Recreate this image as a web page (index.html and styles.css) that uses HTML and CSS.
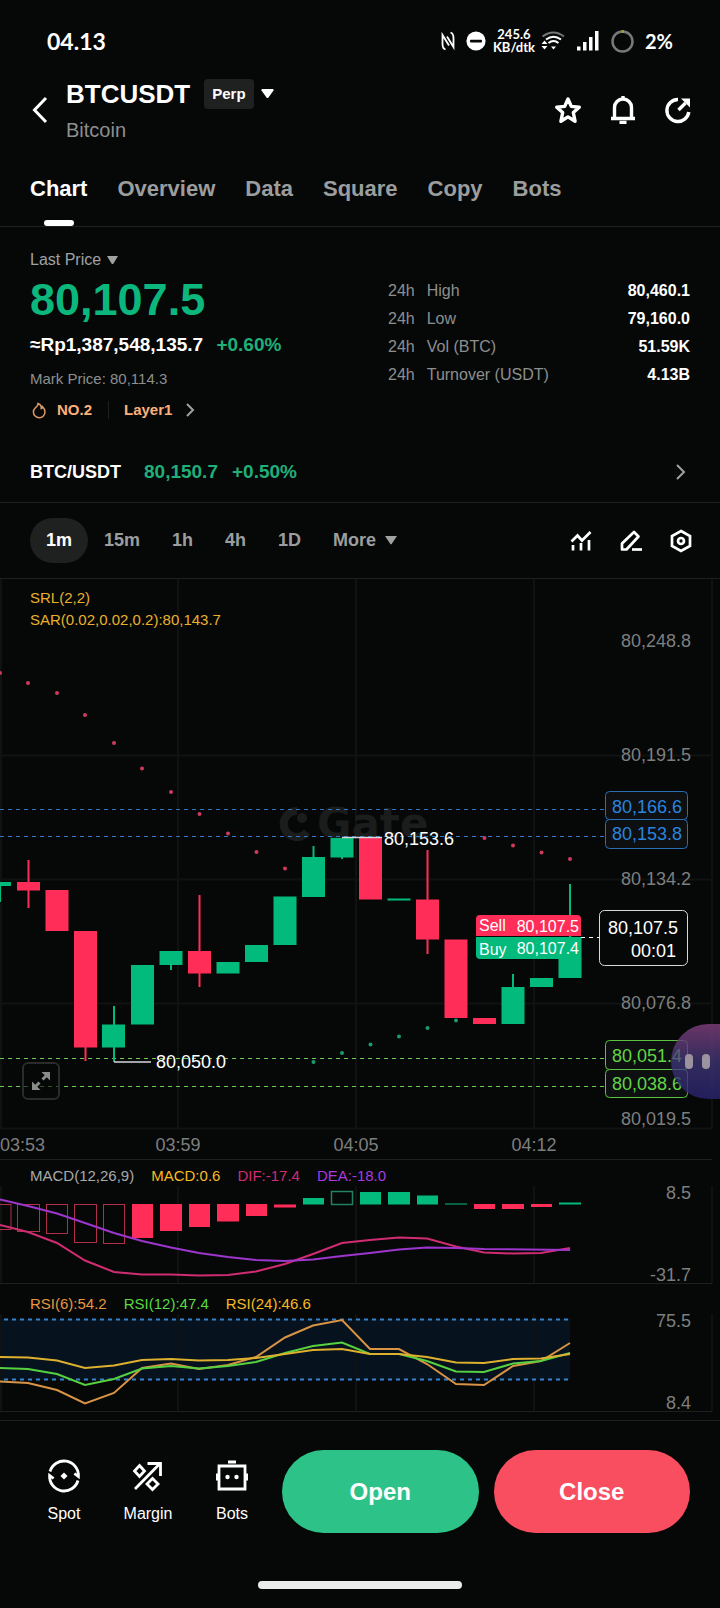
FILE: index.html
```html
<!DOCTYPE html>
<html lang="en">
<head>
  <meta charset="UTF-8" />
  <meta name="viewport" content="width=device-width, initial-scale=1.0"/>
  <title>BTCUSDT Perp</title>
  <link rel="stylesheet" href="styles.css">
</head>
<body>

  <!-- Status bar -->
  <div class="status">
    <span class="clock">04.13</span>
    <div class="status-icons">
      <svg class="nfc" width="14" height="20" viewBox="0 0 14 20" fill="none" stroke="#fff" stroke-width="1.800"><path d="M4.500 18.500Q1.500 17.500 1.500 13V4L8 14.500"/><path d="M9.500 1.500Q12.500 2.500 12.500 7v9L6 5.500"/></svg>
      <svg class="dnd" width="20" height="20" viewBox="0 0 20 20"><circle cx="10" cy="10" r="9.6" fill="#fff"/><rect x="4" y="8.700" width="12" height="2.800" rx="1" fill="#060808"/></svg>
      <span class="speed">245.6<br>KB/dtk</span>
      <svg class="wifi" width="24" height="20" viewBox="0 0 24 20" fill="none" stroke="#fff" stroke-width="2"><path d="M1.500 5.500Q12.500-2.500 23 5.500" stroke="#747676"/><path d="M5 8.500Q12.500 3 20 8.500"/><path d="M7.500 12Q12.500 8 17.500 12"/><path d="M12.500 18.500 10 15.500h5z" fill="#fff" stroke="none"/><path d="M3.500 9.500 6.500 13h-6zM3.500 18.500.5 15h6z" fill="#fff" stroke="none"/></svg>
      <svg class="signal" width="22" height="20" viewBox="0 0 22 20" fill="#fff"><rect x="0" y="15.500" width="3.500" height="4"/><rect x="6" y="11" width="3.500" height="8.500"/><rect x="12" y="6" width="3.500" height="13.500"/><rect x="18" y="0" width="3.500" height="19.500"/></svg>
      <svg class="battery" width="23" height="23" viewBox="0 0 23 23" fill="none" stroke-width="2.500"><circle cx="11.500" cy="11.500" r="10" stroke="#777979"/><path d="M10.500 1.500h2.500" stroke="#a9a42c"/></svg>
      <span class="percent">2%</span>
    </div>
  </div>

  <!-- Header -->
  <header class="header">
    <button class="icon-btn back" aria-label="Back">
      <svg width="16" height="28" viewBox="0 0 16 28" fill="none" stroke="#fff" stroke-width="3"><path d="M14 2 2.500 14 14 26"/></svg>
    </button>
    <div class="pair">
      <div class="pair-row">
        <h1>BTCUSDT</h1>
        <span class="badge">Perp</span>
        <button class="icon-btn" aria-label="Change pair">
          <svg width="13" height="10" viewBox="0 0 13 10"><path d="M1 0h11q1 .5.500 1.500L7.500 8.500q-1 1-2 0L.5 1.500Q0 .5 1 0z" fill="#fff"/></svg>
        </button>
      </div>
      <p>Bitcoin</p>
    </div>
    <div class="header-icons">
      <button class="icon-btn" aria-label="Favourite">
        <svg width="28" height="28" viewBox="0 0 28 28" fill="none" stroke="#fff" stroke-width="3.400" stroke-linejoin="round"><path d="m14 3 3.300 7.400 8 .8-6 5.300 1.800 8.800-7.100-4.400-7.100 4.400 1.800-8.800-6-5.300 8-.8z"/></svg>
      </button>
      <button class="icon-btn" aria-label="Alerts">
        <svg width="28" height="28" viewBox="0 0 28 28" fill="none" stroke="#fff" stroke-width="3.400"><path d="M2 22.500h24M5.500 22.500V11.500a8.500 8.500 0 0 1 17 0v11"/><path d="M14 0v3.500M10.500 26.500h7"/></svg>
      </button>
      <button class="icon-btn" aria-label="Share">
        <svg width="28" height="28" viewBox="0 0 28 28" fill="none" stroke="#fff" stroke-width="3.400"><path d="M14 3.500A11 11 0 1 0 24.800 16"/><path d="m14.500 14 7-7"/><path d="M17 2.500h9v9z" fill="#fff" stroke="none"/></svg>
      </button>
    </div>
  </header>

  <nav class="tabs">
    <a href="#chart" class="active">Chart</a>
    <a href="#overview">Overview</a>
    <a href="#data">Data</a>
    <a href="#square">Square</a>
    <a href="#copy">Copy</a>
    <a href="#bots">Bots</a>
  </nav>

  <!-- Price summary -->
  <section class="summary">
    <div class="price">
      <button class="price-type">Last Price
        <svg width="11" height="9" viewBox="0 0 11 9"><path d="M0 0h11L6.500 7.500q-1 1-2 0z" fill="#a0a2a2"/></svg>
      </button>
      <div class="last">80,107.5</div>
      <div class="fiat">≈Rp1,387,548,135.7 <span class="up">+0.60%</span></div>
      <div class="mark">Mark Price: 80,114.3</div>
      <div class="tags">
        <svg width="18" height="20" viewBox="0 0 18 20" fill="none" stroke="#e09a64" stroke-width="1.500"><path d="M8 3.500c2.500 1 3.500 3 3.200 5 .9-.2 1.400-.9 1.400-1.800 1.600 1.500 2.400 3.400 2.400 5.100a5.800 5.800 0 0 1-11.600.2c0-2 .9-3.100 2-4.200C7.200 6.500 8 5.400 8 3.500z"/></svg>
        <a href="#rank">NO.2</a>
        <span class="divider"></span>
        <a href="#layer1">Layer1</a>
        <svg class="tag-arrow" width="9" height="14" viewBox="0 0 9 14" fill="none" stroke="#a0a2a2" stroke-width="2"><path d="m1 1 6 6-6 6"/></svg>
      </div>
    </div>
    <table class="stats">
      <tr><th>24h</th><th>High</th><td>80,460.1</td></tr>
      <tr><th>24h</th><th>Low</th><td>79,160.0</td></tr>
      <tr><th>24h</th><th>Vol (BTC)</th><td>51.59K</td></tr>
      <tr><th>24h</th><th>Turnover (USDT)</th><td>4.13B</td></tr>
    </table>
  </section>

  <a class="spot-row" href="#spot">
    <span>BTC/USDT</span>
    <span class="up spot-price">80,150.7</span>
    <span class="up">+0.50%</span>
    <svg width="10" height="16" viewBox="0 0 10 16" fill="none" stroke="#a0a2a2" stroke-width="2"><path d="m1 1 7 7-7 7"/></svg>
  </a>

  <!-- Timeframes -->
  <div class="frames">
    <button class="active">1m</button>
    <button>15m</button>
    <button>1h</button>
    <button>4h</button>
    <button>1D</button>
    <button>More <svg width="12" height="9" viewBox="0 0 12 9"><path d="M0 0h12L6.500 8.200h-1z" fill="#a0a2a2"/></svg></button>
    <div class="tools">
      <button class="icon-btn" aria-label="Indicators">
        <svg width="24" height="24" viewBox="0 0 24 24" fill="none" stroke="#fff" stroke-width="2.700"><path d="m2.500 12.500 6-6 4.500 5L21.500 3M4 16v5.500M12 14v7.500M20 11v10.500"/></svg>
      </button>
      <button class="icon-btn" aria-label="Draw">
        <svg width="24" height="24" viewBox="0 0 24 24" fill="none" stroke="#fff" stroke-width="2.700"><path d="M3 14.500 15 3l4.500 4.500L7.500 20.500H3z" stroke-linejoin="round"/><path d="M13 20.500h10"/></svg>
      </button>
      <button class="icon-btn" aria-label="Chart settings">
        <svg width="24" height="24" viewBox="0 0 24 24" fill="none" stroke="#fff" stroke-width="2.700"><path d="m12 2 9 5v10l-9 5-9-5V7z"/><circle cx="12" cy="12" r="3"/></svg>
      </button>
    </div>
  </div>

  <!-- Candles -->
  <section class="chart">
    <div class="legend overlay">
      <div>SRL(2,2)</div>
      <div>SAR(0.02,0.02,0.2):80,143.7</div>
    </div>
    <svg class="plot" viewBox="0 579 720 581">
      <g class="grid">
        <path d="M1 579v549M178 579v549M356 579v549M534 579v549M712 579v549"/>
        <path d="M0 755.500h712M0 879.500h712M0 1003.500h712M0 1128.500h712"/>
      </g>
      <path class="rule" d="M0 1159.500h712"/>

      <!-- watermark -->
      <g class="watermark">
        <path d="M307 832a13 13 0 1 1-10-21" fill="none" stroke="#1b1c1c" stroke-width="8"/>
        <circle cx="302" cy="818" r="5"/>
        <text x="317" y="838">Gate</text>
      </g>

      <g class="dash blue"><path d="M0 809.500h605M0 836.500h605"/></g>
      <g class="dash green"><path d="M0 1058.500h605M0 1086.500h605"/></g>

      <!-- candles -->
      <g class="up-fill">
        <rect x="0" y="882" width="11" height="4"/><rect x="0" y="886" width="1" height="16"/>
        <rect x="102" y="1024.500" width="23" height="23"/><rect x="113" y="1006" width="2" height="56"/>
        <rect x="131" y="965" width="23" height="59.500"/>
        <rect x="159.500" y="951" width="23" height="14"/><rect x="170" y="965" width="2" height="5"/>
        <rect x="216.500" y="962" width="23" height="11.500"/>
        <rect x="245" y="945" width="23" height="17"/>
        <rect x="273.500" y="896.500" width="23" height="48.500"/>
        <rect x="302" y="857" width="23" height="40"/><rect x="312.500" y="846" width="2" height="12"/>
        <rect x="330.500" y="838" width="23" height="19.500"/><rect x="341" y="857" width="2" height="2"/>
        <rect x="387.500" y="898.500" width="23" height="2"/>
        <rect x="501.500" y="987" width="23" height="37"/><rect x="512" y="974" width="2" height="14"/>
        <rect x="530" y="978" width="23" height="9"/>
        <rect x="558.500" y="937" width="23" height="41"/><rect x="569" y="884" width="2" height="54"/>
      </g>
      <g class="down-fill">
        <rect x="17" y="882" width="23" height="8.500"/><rect x="27.500" y="860" width="2" height="48"/>
        <rect x="45.500" y="890" width="23" height="41"/>
        <rect x="74" y="931" width="23" height="116.500"/><rect x="84.500" y="1047" width="2" height="14"/>
        <rect x="188" y="951" width="23" height="22.500"/><rect x="198.500" y="895" width="2" height="92"/>
        <rect x="359" y="837.500" width="23" height="62"/>
        <rect x="416" y="899.500" width="23" height="40"/><rect x="426.500" y="850" width="2" height="104"/>
        <rect x="444.500" y="939.500" width="23" height="78.500"/>
        <rect x="473" y="1018" width="23" height="6"/>
      </g>

      <!-- SAR dots -->
      <g class="sar-down">
        <circle cx="0" cy="673" r="2"/><circle cx="28" cy="683" r="2"/><circle cx="57" cy="693" r="2"/><circle cx="85" cy="715" r="2"/>
        <circle cx="114" cy="743" r="2"/><circle cx="142" cy="768.500" r="2"/><circle cx="171" cy="792" r="2"/><circle cx="199.500" cy="814" r="2"/>
        <circle cx="228" cy="833.500" r="2"/><circle cx="256.500" cy="852" r="2"/><circle cx="285" cy="868.500" r="2"/>
        <circle cx="484.500" cy="838" r="2"/><circle cx="513" cy="845.500" r="2"/><circle cx="541.500" cy="852.500" r="2"/><circle cx="570" cy="859" r="2"/>
      </g>
      <g class="sar-up">
        <circle cx="313.500" cy="1062" r="2"/><circle cx="342" cy="1053" r="2"/><circle cx="370.500" cy="1044.500" r="2"/>
        <circle cx="399" cy="1036.500" r="2"/><circle cx="427.500" cy="1028" r="2"/><circle cx="456" cy="1020.500" r="2"/>
      </g>

      <!-- high / low callouts -->
      <path d="M342 837.500h40M114 1062h37" stroke="#d5d8d8" stroke-width="1.500"/>
      <g class="callout">
        <text x="384" y="845">80,153.6</text>
        <text x="156" y="1068">80,050.0</text>
      </g>

      <!-- sell / buy -->
      <g class="order">
        <path class="down-fill" d="M476 936v-17q0-4 4-4h97q4 0 4 4v17z"/>
        <path class="up-fill" d="M476 937v18q0 4 4 4h101v-22z"/>
        <text x="479" y="931">Sell</text><text x="579" y="932" text-anchor="end">80,107.5</text>
        <text x="479" y="955">Buy</text><text x="579" y="954" text-anchor="end">80,107.4</text>
      </g>
      <path d="M581 937.500h18" stroke="#fff" stroke-dasharray="4 4"/>

      <!-- price axis -->
      <g class="axis">
        <text x="691" y="647">80,248.8</text>
        <text x="691" y="761">80,191.5</text>
        <text x="691" y="885">80,134.2</text>
        <text x="691" y="1009">80,076.8</text>
        <text x="691" y="1125">80,019.5</text>
      </g>
      <g class="level level-blue">
        <rect x="605.500" y="791.500" width="82" height="28" rx="4"/><rect x="605.500" y="819.500" width="82" height="29" rx="4"/>
        <text x="682" y="813">80,166.6</text><text x="682" y="840">80,153.8</text>
      </g>
      <g class="level level-green">
        <rect x="605.500" y="1040.500" width="82" height="29" rx="4"/><rect x="605.500" y="1069.500" width="82" height="28" rx="4"/>
        <text x="682" y="1062">80,051.4</text><text x="682" y="1090">80,038.6</text>
      </g>
      <g class="level level-now">
        <rect x="599.500" y="910.500" width="88" height="55" rx="5"/>
        <text x="678" y="934">80,107.5</text><text x="676" y="957">00:01</text>
      </g>

      <g class="times">
        <text x="0" y="1151" text-anchor="start">03:53</text>
        <text x="178" y="1151">03:59</text>
        <text x="356" y="1151">04:05</text>
        <text x="534" y="1151">04:12</text>
      </g>
    </svg>
    <button class="expand" aria-label="Full screen">
      <svg width="20" height="20" viewBox="0 0 20 20" fill="#8a8c8c" stroke="#8a8c8c" stroke-width="3"><path d="m11.500 8.500 4-4M8.500 11.500l-4 4"/><path d="M10.500 1H19v8.500zM1 10.500V19h8.500z" stroke="none"/></svg>
    </button>
    <button class="bubble" aria-label="Assistant"><i></i><i></i></button>
  </section>

  <!-- MACD -->
  <section class="panel macd">
    <div class="legend">
      <span class="c-grey">MACD(12,26,9)</span>
      <span class="c-yellow">MACD:0.6</span>
      <span class="c-pink">DIF:-17.4</span>
      <span class="c-purple">DEA:-18.0</span>
    </div>
    <svg class="plot" viewBox="0 1186 720 98">
      <path class="grid" d="M1 1186v97M178 1186v97M356 1186v97M534 1186v97M712 1186v97"/>
      <g class="hollow-down">
        <rect x="-11" y="1204.500" width="22" height="25"/><rect x="17.500" y="1204.500" width="22" height="27"/>
        <rect x="46.500" y="1204.500" width="21" height="29"/><rect x="74.500" y="1204.500" width="22" height="38"/>
        <rect x="103.500" y="1204.500" width="21" height="39"/>
      </g>
      <g class="down-fill">
        <rect x="132" y="1204" width="21" height="34"/><rect x="160" y="1204" width="22" height="27"/>
        <rect x="189" y="1204" width="21" height="23"/><rect x="217" y="1204" width="22" height="17.500"/>
        <rect x="246" y="1204" width="21" height="12"/><rect x="274" y="1204.500" width="22" height="3"/>
        <rect x="474" y="1204" width="21" height="5"/><rect x="502" y="1204" width="22" height="5"/><rect x="531" y="1204" width="21" height="3"/>
      </g>
      <g class="up-fill">
        <rect x="303" y="1198" width="21" height="6.500"/><rect x="360" y="1192" width="21" height="12.500"/>
        <rect x="388" y="1192" width="22" height="12.500"/><rect x="417" y="1195.500" width="21" height="9"/>
        <rect x="445" y="1203.500" width="22" height="1"/><rect x="559" y="1202.500" width="22" height="2"/>
      </g>
      <rect x="331.500" y="1191.500" width="21" height="13" fill="none" stroke="#238163" stroke-width="1.500"/>
      <polyline class="line s-pink" points="0,1225 28,1232 57,1243 85,1260.500 114,1272 142,1274.500 171,1274.500 199,1275.500 228,1275 256,1271.500 285,1264 313,1254 342,1243 370,1240 399,1237.500 427,1238.500 456,1246.500 484,1252.500 513,1253.500 541,1253 570,1248"/>
      <polyline class="line s-purple" points="0,1199.500 28,1206 57,1213.500 85,1223 114,1233 142,1241 171,1247.500 199,1253 228,1257 256,1260 285,1261 313,1259.500 342,1256 370,1253 399,1249.500 427,1247.500 456,1248 484,1249 570,1250"/>
      <g class="axis">
        <text x="691" y="1199">8.5</text>
        <text x="691" y="1281">-31.7</text>
      </g>
      <path class="rule" d="M0 1283.500h712"/>
    </svg>
  </section>

  <!-- RSI -->
  <section class="panel rsi">
    <div class="legend">
      <span class="c-orange">RSI(6):54.2</span>
      <span class="c-green">RSI(12):47.4</span>
      <span class="c-yellow">RSI(24):46.6</span>
    </div>
    <svg class="plot" viewBox="0 1314 720 98">
      <rect x="0" y="1319" width="570" height="61" fill="#06121e"/>
      <path class="grid" d="M1 1314v97M178 1314v97M356 1314v97M534 1314v97M712 1314v97"/>
      <path class="band" d="M4 1319.500h566M4 1379.500h566"/>
      <polyline class="line s-orange" points="0,1381.500 28,1383 57,1390 85,1403.500 114,1393 142,1368 171,1363.500 199,1369 228,1365 256,1357 285,1337.500 313,1325.500 342,1320 370,1349 399,1349 427,1364 456,1384 484,1385 513,1366 541,1361 570,1343"/>
      <polyline class="line s-green" points="0,1368 28,1369 57,1374 85,1385 114,1379 142,1368.500 171,1366 199,1368.500 228,1366 256,1362 285,1353 313,1346 342,1342.500 370,1354 399,1354 427,1361 456,1371.500 484,1372 513,1363.500 541,1361 570,1353"/>
      <polyline class="line s-yellow" points="0,1357 28,1357.500 57,1360.500 85,1368 114,1365.500 142,1360 171,1359 199,1360.500 228,1360 256,1358 285,1354 313,1350 342,1349 370,1354 399,1354 427,1357 456,1362.500 484,1363 513,1359 541,1358.500 570,1354"/>
      <g class="axis">
        <text x="691" y="1327">75.5</text>
        <text x="691" y="1409">8.4</text>
      </g>
      <path class="rule" d="M0 1411.500h712"/>
    </svg>
  </section>

  <!-- Bottom bar -->
  <footer class="actions">
    <a href="#spot">
      <svg width="36" height="36" viewBox="0 0 36 36" fill="none" stroke="#fff" stroke-width="2.800"><path d="M4 13.500A14.500 14.500 0 0 1 32.400 18.500l-4-3"/><path d="M32 22.500A14.500 14.500 0 0 1 3.600 17.500l4 3"/><path d="m18 14.500 3.500 3.500-3.500 3.500-3.500-3.500z" fill="#fff" stroke="none"/></svg>
      Spot
    </a>
    <a href="#margin">
      <svg width="36" height="36" viewBox="0 0 36 36" fill="none" stroke="#fff" stroke-width="2.800"><path d="M5 31 29 6.500M17.500 5.500H30.500V18"/><path d="M9.500 7.500 14.500 13l-5 5.500-5-5.500zM22.500 20.500l5.500 5.500-5.500 5.500-5.500-5.500z"/></svg>
      Margin
    </a>
    <a href="#bots">
      <svg width="36" height="36" viewBox="0 0 36 36" fill="none" stroke="#fff" stroke-width="2.800"><path d="M5 8h26v23H5zM14 4h8"/><path d="M3.500 15.500v7M32.500 15.500v7" stroke-width="3"/><circle cx="13.500" cy="19" r="2.200" fill="#fff" stroke="none"/><circle cx="22.500" cy="19" r="2.200" fill="#fff" stroke="none"/></svg>
      Bots
    </a>
    <div class="trade">
      <button class="open">Open</button>
      <button class="close">Close</button>
    </div>
  </footer>
  <div class="home-bar"></div>

</body>
</html>
```
FILE: styles.css
```css
* {
  box-sizing: border-box;
  margin: 0;
  padding: 0;
}

body {
  font-family: "Liberation Sans", Arial, sans-serif;
  font-size: 16px;
  background: #060808;
  color: #fff;
}

a {
  color: inherit;
  text-decoration: none;
}

button {
  font: inherit;
  color: inherit;
  background: none;
  border: none;
  cursor: pointer;
}

svg {
  display: block;
}

.icon-btn {
  display: flex;
  align-items: center;
  justify-content: center;
}

.up {
  color: #20ae79;
}

/* Status bar */
.status {
  display: flex;
  justify-content: space-between;
  align-items: center;
  height: 78px;
  padding: 4px 47px 0;
  font-family: Lato, sans-serif;
  font-weight: 700;
}

.clock {
  font-size: 23px;
}

.status-icons {
  display: flex;
  align-items: center;
}

.dnd {
  margin-left: 11px;
}

.speed {
  margin: 0 6px 0 7px;
  font-size: 13px;
  line-height: 13px;
  text-align: center;
}

.signal {
  margin-left: 12px;
}

.battery {
  margin: 0 11px 0 12px;
}

.percent {
  font-size: 20px;
}

/* Header */
.header {
  display: flex;
  align-items: center;
  padding: 0 28px 0 32px;
}

.pair {
  flex: 1;
  margin-left: 18px;
}

.pair-row {
  display: flex;
  align-items: center;
  height: 32px;
}

.pair h1 {
  font-size: 26px;
  line-height: 32px;
}

.badge {
  margin: 0 7px 0 14px;
  padding: 0 8px;
  border-radius: 4px;
  background: #1f2121;
  font-size: 15px;
  font-weight: bold;
  line-height: 30px;
}

.pair p {
  margin-top: 8px;
  font-size: 20px;
  line-height: 24px;
  color: #8d8f8f;
}

.header-icons {
  display: flex;
  gap: 27px;
}

/* Tabs */
.tabs {
  display: flex;
  gap: 30px;
  padding: 29px 30px 19px;
  border-bottom: 1px solid #1e2020;
  font-size: 22px;
  font-weight: bold;
  line-height: 36px;
  color: #9c9e9e;
}

.tabs a {
  position: relative;
}

.tabs .active {
  color: #fff;
}

.tabs .active::after {
  content: "";
  position: absolute;
  left: 50%;
  bottom: -19px;
  width: 30px;
  height: 6px;
  margin-left: -15px;
  border-radius: 3px;
  background: #fff;
}

/* Price summary */
.summary {
  display: flex;
  justify-content: space-between;
  align-items: flex-start;
  padding: 23px 30px 0;
}

.price-type {
  display: flex;
  align-items: center;
  gap: 6px;
  line-height: 20px;
  color: #a0a2a2;
}

.last {
  font-size: 45px;
  font-weight: bold;
  line-height: 60px;
  color: #0cb77d;
}

.fiat {
  font-size: 19px;
  font-weight: bold;
  line-height: 30px;
}

.fiat .up {
  margin-left: 8px;
}

.mark {
  margin-top: 8px;
  font-size: 15px;
  line-height: 22px;
  color: #8d8f8f;
}

.tags {
  display: flex;
  align-items: center;
  margin-top: 9px;
  font-size: 15px;
  font-weight: bold;
  line-height: 22px;
  color: #fcb078;
}

.tags a {
  margin-left: 9px;
}

.divider {
  width: 1px;
  height: 18px;
  margin: 0 6px 0 16px;
  background: #1e2020;
}

.tag-arrow {
  margin-left: 14px;
}

.stats {
  width: 302px;
  margin-top: 27px;
  border-collapse: collapse;
  line-height: 28px;
  white-space: nowrap;
}

.stats th {
  padding-right: 12px;
  font-weight: normal;
  text-align: left;
  color: #8d8f8f;
}

.stats td {
  width: 100%;
  font-weight: bold;
  text-align: right;
}

.spot-row {
  display: flex;
  align-items: center;
  padding: 39px 34px 18px 30px;
  border-bottom: 1px solid #1e2020;
  font-size: 18px;
  font-weight: bold;
  line-height: 24px;
}

.spot-row .up {
  font-size: 19px;
}

.spot-price {
  margin: 0 14px 0 23px;
}

.spot-row svg {
  margin-left: auto;
}

/* Timeframes */
.frames {
  display: flex;
  align-items: center;
  padding: 15px 27px 15px 30px;
  border-bottom: 1px solid #1e2020;
  font-size: 18px;
  font-weight: bold;
  color: #9c9e9e;
}

.frames > button {
  display: flex;
  align-items: center;
  gap: 9px;
  height: 45px;
  padding: 0 16px;
  border-radius: 23px;
}

.frames > .active {
  background: #1f2121;
  color: #fff;
}

.tools {
  display: flex;
  gap: 26px;
  margin-left: auto;
}

/* Chart */
.chart {
  position: relative;
}

.plot {
  width: 100%;
  height: auto;
  font-size: 18px;
}

.legend {
  display: flex;
  gap: 17px;
  padding: 0 30px;
  font-size: 15px;
  line-height: 20px;
}

.overlay {
  position: absolute;
  top: 8px;
  left: 0;
  display: block;
  line-height: 22px;
  color: #eab02c;
}

.grid {
  fill: none;
  stroke: #101212;
  stroke-width: 2;
}

.rule {
  stroke: #1e2020;
}

.watermark {
  fill: #1b1c1c;
  font-family: "DejaVu Sans", sans-serif;
  font-size: 42px;
  font-weight: bold;
}

.dash {
  stroke-dasharray: 4 4;
}

.blue {
  stroke: #2f78c4;
}

.green {
  stroke: #70c952;
}

.up-fill {
  fill: #02ba7c;
}

.down-fill {
  fill: #ff2d58;
}

.sar-down {
  fill: #cd3a5c;
}

.sar-up {
  fill: #1a9a6f;
}

.callout,
.order text {
  fill: #fff;
}

.order {
  font-size: 16px;
}

.axis {
  fill: #7d7f7f;
  text-anchor: end;
}

.times {
  fill: #7d7f7f;
  text-anchor: middle;
}

.level {
  text-anchor: end;
}

.level rect {
  fill: #0d0f10;
}

.level-blue {
  fill: #2b83dd;
}

.level-blue rect {
  stroke: #2b6eb4;
}

.level-green {
  fill: #62d544;
}

.level-green rect {
  stroke: #5cc342;
}

.level-now {
  fill: #fff;
}

.level-now rect {
  fill: #060808;
  stroke: #d8dada;
}

.expand {
  position: absolute;
  left: 22px;
  bottom: 60px;
  display: flex;
  align-items: center;
  justify-content: center;
  width: 38px;
  height: 38px;
  border: 2px solid #2a2c2c;
  border-radius: 6px;
  background: rgba(6, 8, 8, 0.6);
}

.bubble {
  position: absolute;
  right: 0;
  bottom: 61px;
  display: flex;
  align-items: center;
  gap: 9px;
  width: 49px;
  height: 75px;
  padding-left: 14px;
  border-radius: 38px 0 0 38px;
  background: linear-gradient(rgba(117, 58, 112, 0.9), rgba(70, 58, 130, 0.7), rgba(38, 33, 100, 0.9));
}

.bubble i {
  width: 8px;
  height: 15px;
  border-radius: 4px;
  background: #9c93a0;
}

/* Indicator panels */
.macd {
  padding-top: 6px;
}

.rsi {
  padding-top: 10px;
}

.panel .plot {
  overflow: visible;
}

.hollow-down {
  fill: none;
  stroke: #b0304b;
}

.band {
  stroke: #3583cc;
  stroke-width: 2;
  stroke-dasharray: 4 4;
}

.line {
  fill: none;
  stroke-width: 2;
}

.s-pink { stroke: #d02c72; }
.s-purple { stroke: #9c36cc; }
.s-orange { stroke: #d99344; }
.s-green { stroke: #56d140; }
.s-yellow { stroke: #deb02f; }

.c-grey { color: #a8aaaa; }
.c-yellow { color: #f7b924; }
.c-pink { color: #d02c72; }
.c-purple { color: #a93ae0; }
.c-orange { color: #e8953f; }
.c-green { color: #5bd941; }

/* Bottom bar */
.actions {
  display: flex;
  align-items: flex-start;
  margin-top: 8px;
  padding: 29px 30px 48px 22px;
  border-top: 1px solid #1e2020;
}

.actions a {
  display: flex;
  flex-direction: column;
  align-items: center;
  gap: 8px;
  width: 84px;
  padding-top: 8px;
  line-height: 24px;
}

.trade {
  display: flex;
  flex: 1;
  gap: 15px;
  margin-left: 8px;
}

.trade button {
  flex: 1;
  height: 83px;
  border-radius: 42px;
  font-size: 24px;
  font-weight: bold;
}

.open {
  background: #2dc388;
}

.close {
  background: #f94d60;
}

.home-bar {
  width: 204px;
  height: 8px;
  margin: 0 auto 19px;
  border-radius: 4px;
  background: #e9eceb;
}
```
